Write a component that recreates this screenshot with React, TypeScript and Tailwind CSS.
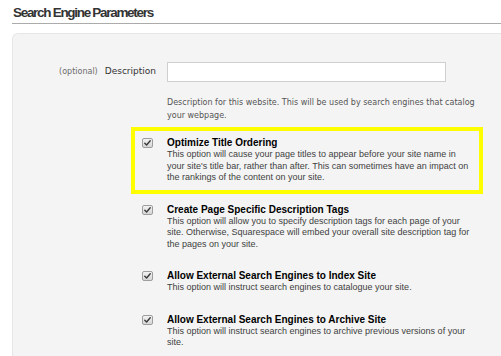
import React from 'react';

type Option = {
  title: string;
  text: string;
  highlight?: boolean;
};

const options: Option[] = [
  {
    title: 'Optimize Title Ordering',
    text: "This option will cause your page titles to appear before your site name in your site's title bar, rather than after. This can sometimes have an impact on the rankings of the content on your site.",
    highlight: true,
  },
  {
    title: 'Create Page Specific Description Tags',
    text: 'This option will allow you to specify description tags for each page of your site. Otherwise, Squarespace will embed your overall site description tag for the pages on your site.',
  },
  {
    title: 'Allow External Search Engines to Index Site',
    text: 'This option will instruct search engines to catalogue your site.',
  },
  {
    title: 'Allow External Search Engines to Archive Site',
    text: 'This option will instruct search engines to archive previous versions of your site.',
  },
];

const CheckBox = () => (
  <div className="mt-[1px] flex h-[10px] w-[11px] shrink-0 items-center justify-center rounded-[2px] border border-[#9d9d9d] bg-gradient-to-b from-[#f2f2f2] to-[#d6d6d6]">
    <svg width="7" height="6" viewBox="0 0 7 6" fill="none">
      <path d="M0.8 3.2 L2.6 5 L6.2 0.8" stroke="#3a3a3a" strokeWidth="1.4" strokeLinecap="round" strokeLinejoin="round" />
    </svg>
  </div>
);

const OptionRow = ({ option }: { option: Option }) => (
  <div
    className={`flex w-[352px] gap-[14px] border-4 px-[7px] py-[6px] ${
      option.highlight ? 'border-[#ffff00]' : 'border-transparent'
    }`}
  >
    <CheckBox />
    <div className="flex-1 font-['Liberation_Sans',Arial,sans-serif]">
      <div className="text-[10px] font-bold leading-[12px] text-black">{option.title}</div>
      <p className="text-[9px] leading-[11.5px] text-[#3f3f3f]">{option.text}</p>
    </div>
  </div>
);

export default function App() {
  return (
    <div className="h-[356px] w-[501px] overflow-hidden bg-white">
      <div className="h-[23px] pl-[13px] pt-[6px] font-['Liberation_Sans',Arial,sans-serif] text-[13.5px] font-bold leading-[14px] tracking-[-1.3px] text-[#333]">
        Search Engine Parameters
      </div>
      <div className="ml-[12px] h-px bg-[#ababab]" />
      <div className="ml-[12px] mt-[9px] h-[400px] rounded-tl-[6px] border-l border-t border-[#e6e6e6] bg-[#f4f4f4] pt-[28px]">
        <div className="flex items-center font-['DejaVu_Sans',Tahoma,sans-serif]">
          <div className="flex w-[144px] items-center justify-end gap-[7px] pr-[1px]">
            <span className="text-[8px] text-[#6b6b6b]">(optional)</span>
            <span className="text-[9px] text-[#333]">Description</span>
          </div>
          <div className="ml-[10px] h-[20px] w-[279px] border border-[#cfcfcf] bg-white" />
        </div>
        <p className="ml-[154px] mt-[14px] w-[320px] font-['DejaVu_Sans',Tahoma,sans-serif] text-[8px] leading-[13px] text-[#555]">
          Description for this website. This will be used by search engines that catalog your webpage.
        </p>
        <div className="ml-[118px] mt-[5px] flex flex-col">
          {options.map((o) => (
            <OptionRow key={o.title} option={o} />
          ))}
        </div>
      </div>
    </div>
  );
}
